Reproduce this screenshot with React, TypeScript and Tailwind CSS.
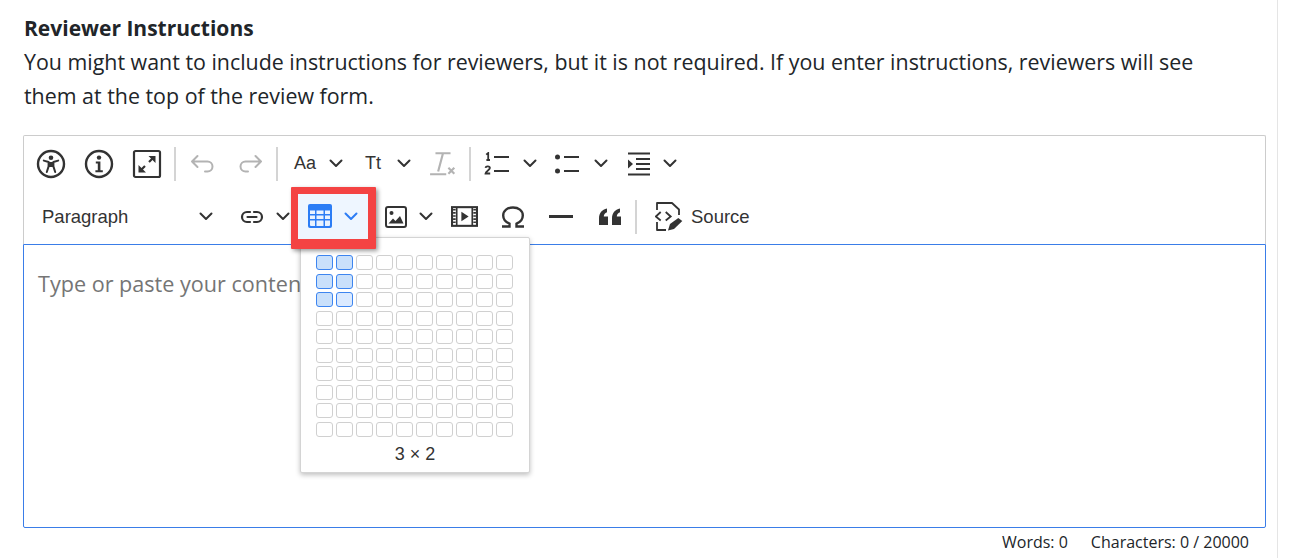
import type { ReactNode } from "react";

const iconColor = "#333333";
const mutedIcon = "#b3b3b3";

function Chevron({ color = iconColor }: { color?: string }) {
  return (
    <svg width="14" height="9" viewBox="0 0 14 9" fill="none">
      <path d="M1.500 1.500 7 7l5.500-5.500" stroke={color} strokeWidth="2" strokeLinecap="round" strokeLinejoin="round" />
    </svg>
  );
}

function Item({ className, children }: { className: string; children: ReactNode }) {
  return <div className={`flex h-[36px] shrink-0 items-center justify-center ${className}`}>{children}</div>;
}

function Separator({ className = "" }: { className?: string }) {
  return <div className={`h-[34px] w-[2px] shrink-0 bg-[#d4d4d4] ${className}`} />;
}

function AccessibilityIcon() {
  return (
    <svg width="30" height="30" viewBox="0 0 30 30" fill="none">
      <circle cx="15" cy="15" r="13" stroke={iconColor} strokeWidth="2.400" />
      <circle cx="15" cy="8.800" r="2.300" fill={iconColor} />
      <path d="M7.800 11.600 12.600 13v4.400L10.800 23M22.200 11.600 17.400 13v4.400l1.800 5.600" stroke={iconColor} strokeWidth="2" strokeLinecap="round" strokeLinejoin="round" />
      <path d="M12.600 13h4.800v5h-4.800z" fill={iconColor} />
    </svg>
  );
}

function InfoIcon() {
  return (
    <svg width="30" height="30" viewBox="0 0 30 30" fill="none">
      <circle cx="15" cy="15" r="13" stroke={iconColor} strokeWidth="2.400" />
      <circle cx="15" cy="8.600" r="2.200" fill={iconColor} />
      <path d="M11.800 12.600h4.600v8.600h2.400v2h-7.400v-2h2.400v-6.600h-2z" fill={iconColor} />
    </svg>
  );
}

function ExpandIcon() {
  return (
    <svg width="30" height="30" viewBox="0 0 30 30" fill="none">
      <rect x="2" y="2" width="26" height="26" rx="1.500" stroke={iconColor} strokeWidth="2.200" />
      <path d="M17 13 21.500 8.500M8.500 21.500 13 17" stroke={iconColor} strokeWidth="2.200" />
      <path d="M16.500 7h7v7zM6.500 16l7.500 7.500H6.500z" fill={iconColor} />
    </svg>
  );
}

function UndoIcon({ flip = false }: { flip?: boolean }) {
  return (
    <svg width="26" height="20" viewBox="0 0 26 20" fill="none" className={flip ? "-scale-x-100" : ""}>
      <path d="M7.500 2 2 7.500 7.500 13M2 7.500h15.500a5 5 0 0 1 0 10H15" stroke={mutedIcon} strokeWidth="2" strokeLinecap="round" strokeLinejoin="round" />
    </svg>
  );
}

function ClearFormatIcon() {
  return (
    <svg width="28" height="26" viewBox="0 0 26 24" fill="none">
      <path d="M6 2h14M13 2 8.500 19M1 21.500h15" stroke={mutedIcon} strokeWidth="2" />
      <path d="M18 15.500l5.500 5.500M23.500 15.500 18 21" stroke={mutedIcon} strokeWidth="2" />
    </svg>
  );
}

function NumberedListIcon() {
  return (
    <svg width="26" height="24" viewBox="0 0 26 24" fill="none">
      <path d="M10 5h15M10 19h15" stroke={iconColor} strokeWidth="2" />
      <path d="M2.200 2.600 4.200 1v7M2.400 8h3.600" stroke={iconColor} strokeWidth="1.800" />
      <path d="M1.500 15.800c.3-2 4.400-2 4.400.3 0 1.800-4.200 3-4.400 5.400h4.700" stroke={iconColor} strokeWidth="1.800" />
    </svg>
  );
}

function BulletListIcon() {
  return (
    <svg width="26" height="24" viewBox="0 0 26 24" fill="none">
      <circle cx="3.500" cy="5" r="2.500" fill={iconColor} />
      <circle cx="3.500" cy="19" r="2.500" fill={iconColor} />
      <path d="M10 5h15M10 19h15" stroke={iconColor} strokeWidth="2" />
    </svg>
  );
}

function IndentIcon() {
  return (
    <svg width="24" height="24" viewBox="0 0 24 24" fill="none">
      <path d="M1 1.500h22M1 22.500h22M9 7h14M9 12h14M9 17h14" stroke={iconColor} strokeWidth="2" />
      <path d="M1 7.500 6 12l-5 4.500z" fill={iconColor} />
    </svg>
  );
}

function LinkIcon() {
  return (
    <svg width="24" height="14" viewBox="0 0 24 14" fill="none">
      <path d="M10 2H7a5 5 0 0 0 0 10h3M14 2h3a5 5 0 0 1 0 10h-3M7.500 7h9" stroke={iconColor} strokeWidth="2.200" strokeLinecap="round" />
    </svg>
  );
}

function TableIcon() {
  return (
    <svg width="24" height="24" viewBox="0 0 24 24" fill="none">
      <rect x="0" y="0" width="24" height="24" rx="2" fill="#2c7df5" />
      <path d="M2 6.500h5v3.500H2zM8.500 6.500h7v3.500h-7zM17 6.500h5v3.500h-5zM2 11.500h5v3.500H2zM8.500 11.500h7v3.500h-7zM17 11.500h5v3.500h-5zM2 16.500h5V22H3a1 1 0 0 1-1-1zM8.500 16.500h7V22h-7zM17 16.500h5V21a1 1 0 0 1-1 1h-4z" fill="#e9f3ff" />
    </svg>
  );
}

function ImageIcon() {
  return (
    <svg width="22" height="22" viewBox="0 0 22 22" fill="none">
      <rect x="1" y="1" width="20" height="20" rx="2" stroke={iconColor} strokeWidth="2" />
      <circle cx="6.500" cy="7" r="2" fill={iconColor} />
      <path d="M3.500 17.500 8 12.500l2.500 2.500L15 10l3.500 7.500z" fill={iconColor} />
    </svg>
  );
}

function MediaIcon() {
  return (
    <svg width="27" height="21" viewBox="0 0 26 20" fill="none">
      <rect x="1" y="1" width="24" height="18" stroke={iconColor} strokeWidth="2" />
      <path d="M5.500 1v18M20.500 1v18" stroke={iconColor} strokeWidth="1.600" />
      <path d="M2 3.500h2.500M2 6.500h2.500M2 9.500h2.500M2 12.500h2.500M2 15.500h2.500M21.500 3.500H24M21.500 6.500H24M21.500 9.500H24M21.500 12.500H24M21.500 15.500H24" stroke={iconColor} strokeWidth="1.500" />
      <path d="M10 5.500v9l7-4.500z" fill={iconColor} />
    </svg>
  );
}

function OmegaIcon() {
  return (
    <svg width="24" height="22" viewBox="0 0 24 22" fill="none">
      <path d="M1 20.500h7.500v-2.800C4.500 16 2.200 13 2.200 9.500 2.200 4.500 6.500 1.500 12 1.500s9.800 3 9.800 8c0 3.500-2.300 6.500-6.300 8.200v2.800H23" stroke={iconColor} strokeWidth="2.400" />
    </svg>
  );
}

function QuoteIcon() {
  return (
    <svg width="22" height="18" viewBox="0 0 22 18" fill="none">
      <path d="M0 17V10.500C0 5 3 1.500 8 .5v3.700C5.800 5 4.800 6.500 4.800 8.500H9V17zM13 17V10.500C13 5 16 1.500 21 .5v3.700c-2.200.8-3.200 2.300-3.200 4.300H22V17z" fill={iconColor} />
    </svg>
  );
}

function SourceIcon() {
  return (
    <svg width="28" height="29" viewBox="0 0 28 29" fill="none">
      <path d="M2 8V1h15l7 6.500V13M2 20v8h9" stroke={iconColor} strokeWidth="1.800" strokeLinejoin="round" />
      <path d="M5.700 10 .8 14.500l4.900 4M10.700 10l5 4.500-5 4" stroke={iconColor} strokeWidth="1.800" />
      <path d="M13 28.500l2-6.500 8.300-6 4 3-8.300 8z" fill={iconColor} />
    </svg>
  );
}

function TableGrid() {
  const rows = Array.from({ length: 10 }, (_, r) => r);
  const cols = Array.from({ length: 10 }, (_, c) => c);
  return (
    <div className="flex flex-col gap-[3.500px]">
      {rows.map((r) => (
        <div key={r} className="flex gap-[3px]">
          {cols.map((c) => {
            const on = r < 3 && c < 2;
            const hovered = r === 2 && c === 1;
            return (
              <div
                key={c}
                className={`h-[15px] w-[17px] rounded-[3px] border ${
                  on ? "border-[#3d85f0]" : "border-[#d0d0d0]"
                } ${hovered ? "bg-[#dbeaff]" : on ? "bg-[#c9e0fb]" : "bg-white"}`}
              />
            );
          })}
        </div>
      ))}
    </div>
  );
}

function Toolbar() {
  return (
    <div className="rounded-t-[2px] border border-b-0 border-[#cccccc] pl-[3px]">
      <div className="flex h-[54px] items-center pt-[1px]">
        <Item className="w-[48px]"><AccessibilityIcon /></Item>
        <Item className="w-[48px]"><InfoIcon /></Item>
        <Item className="w-[48px]"><ExpandIcon /></Item>
        <Separator className="ml-[3px]" />
        <Item className="ml-[3px] w-[47px]"><UndoIcon /></Item>
        <Item className="w-[47px]"><UndoIcon flip /></Item>
        <Separator className="ml-[3px]" />
        <Item className="ml-[7px] w-[40px] font-['Liberation_Sans',sans-serif] text-[18px] font-medium text-[#333]">Aa</Item>
        <Item className="w-[22px]"><Chevron /></Item>
        <Item className="ml-[6px] w-[40px] font-['Liberation_Sans',sans-serif] text-[18px] font-medium text-[#333]">Tt</Item>
        <Item className="w-[22px]"><Chevron /></Item>
        <Item className="ml-[10px] w-[36px]"><ClearFormatIcon /></Item>
        <Separator className="ml-[8px]" />
        <Item className="ml-[8px] w-[36px]"><NumberedListIcon /></Item>
        <Item className="w-[30px]"><Chevron /></Item>
        <Item className="ml-[4px] w-[36px]"><BulletListIcon /></Item>
        <Item className="w-[32px]"><Chevron /></Item>
        <Item className="ml-[4px] w-[36px]"><IndentIcon /></Item>
        <Item className="w-[26px]"><Chevron /></Item>
      </div>
      <div className="flex h-[54px] items-center pb-[1px]">
        <div className="flex h-[36px] w-[188px] shrink-0 items-center justify-between pl-[15px] pr-[2px] font-['Liberation_Sans',sans-serif] text-[18.500px] text-[#333]">
          <span>Paragraph</span>
          <Chevron />
        </div>
        <Item className="ml-[15px] w-[44px]"><LinkIcon /></Item>
        <Item className="w-[18px]"><Chevron /></Item>
        <Item className="ml-[6px] w-[44px]"><TableIcon /></Item>
        <Item className="w-[18px]"><Chevron color="#2c7df5" /></Item>
        <Item className="ml-[18px] w-[36px]"><ImageIcon /></Item>
        <Item className="w-[24px]"><Chevron /></Item>
        <Item className="w-[52px]"><MediaIcon /></Item>
        <Item className="w-[46px]"><OmegaIcon /></Item>
        <Item className="w-[50px]"><svg width="24" height="3" viewBox="0 0 24 3"><rect width="24" height="3" fill={iconColor} /></svg></Item>
        <Item className="w-[48px]"><QuoteIcon /></Item>
        <Separator className="ml-[1px]" />
        <Item className="ml-[17px] w-[30px]"><SourceIcon /></Item>
        <div className="ml-[7px] font-['Liberation_Sans',sans-serif] text-[18.500px] text-[#333]">Source</div>
      </div>
    </div>
  );
}

export default function App() {
  return (
    <div className="h-[558px] w-[1278px] overflow-hidden border-r border-[#e5e5e5] bg-white pl-[23px] pr-[11px] pt-[14px] font-['Open_Sans',sans-serif] text-[#212529]">
      <h2 className="pl-px text-[21px] font-bold leading-[28px]">Reviewer Instructions</h2>
      <p className="mt-[3px] max-w-[1190px] pl-px text-[21.400px] leading-[34px]">
        You might want to include instructions for reviewers, but it is not required. If you enter instructions, reviewers will see them at the top of the review form.
      </p>
      <div className="relative mt-[22px]">
        <Toolbar />
        <div className="h-[284px] rounded-b-[2px] border border-[#3a7de8] px-[14px] py-[24px] text-[21.600px] leading-[30px] text-[#757575]">
          Type or paste your content here!
        </div>
        <div className="flex justify-end gap-[23px] pr-[17px] pt-[4px] text-[16px] leading-[20px]">
          <span>Words: 0</span>
          <span>Characters: 0 / 20000</span>
        </div>
        <div className="absolute left-[277px] top-[102px] w-[230px] rounded-[2px] border border-[#d4d4d4] bg-white px-[15px] pt-[17px] shadow-[0_2px_5px_rgba(0,0,0,0.25)]">
          <TableGrid />
          <div className="pb-[6px] pt-[5px] text-center font-['Liberation_Sans',sans-serif] text-[18px] leading-[24px] text-[#333]">3 × 2</div>
        </div>
        <div className="absolute left-[268px] top-[52px] h-[62px] w-[85px] rounded-[1px] border-[7px] border-r-[8px] border-b-[10px] border-[#f44343] bg-[#eef6ff] shadow-[2px_2px_4px_rgba(0,0,0,0.4)]" />
        <div className="absolute left-[285px] top-[69px]"><TableIcon /></div>
        <div className="absolute left-[321px] top-[77px]"><Chevron color="#2c7df5" /></div>
      </div>
    </div>
  );
}
